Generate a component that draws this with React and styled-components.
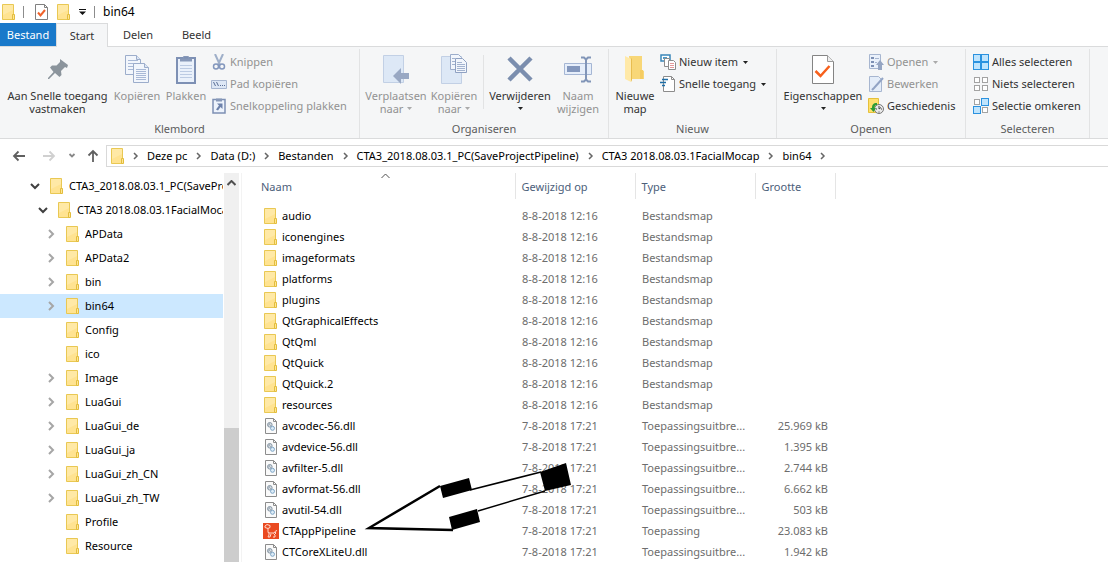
import React from "react";
import styled, { createGlobalStyle } from "styled-components";

const GlobalStyle = createGlobalStyle`
  * { box-sizing: border-box; }
  body { margin: 0; background: #fff; }
  body, button { font-family: "Noto Sans", "Open Sans", sans-serif; font-size: 11px; line-height: 16px; color: #000; }
  button { margin: 0; padding: 0; border: 0; background: none; }
  svg { display: block; flex: none; }
`;

const Window = styled.div`
  display: flex;
  flex-direction: column;
  height: 100vh;
  overflow: hidden;
`;

const TitleBar = styled.header`
  display: flex;
  align-items: center;
  height: 23px;
  padding-left: 2px;
`;
const TitleDivider = styled.span`
  width: 1px;
  height: 12px;
  margin: 0 8px;
  background: #8c8c8c;
`;
const QuickAccess = styled.div`
  display: flex;
  align-items: center;
  gap: 9px;
  padding-left: 3px;
`;
const WindowTitle = styled.span`
  font-size: 12px;
`;

const Tabs = styled.nav`
  display: flex;
  height: 24px;
  border-bottom: 1px solid #dadbdc;
`;
const Tab = styled.button`
  width: ${(p) => p.$width}px;
  height: ${(p) => (p.$file ? 23 : 24)}px;
  color: ${(p) => (p.$file ? "#fff" : "#333")};
  background: ${(p) => (p.$file ? "#1979ca" : p.$active ? "#f5f6f7" : "transparent")};
  border: ${(p) => (p.$active ? "1px solid #dadbdc" : "0")};
  border-bottom: 0;
`;

const Ribbon = styled.div`
  display: flex;
  height: 92px;
  background: #f5f6f7;
  border-bottom: 1px solid #dadbdc;
`;
const Group = styled.section`
  display: flex;
  flex-direction: column;
  height: 89px;
  width: ${(p) => p.$width}px;
  padding: 2px 0 0 ${(p) => p.$pad}px;
  border-right: 1px solid #e2e3e4;
  margin-top: 2px;
`;
const GroupBody = styled.div`
  display: flex;
  height: 71px;
`;
const GroupLabel = styled.div`
  margin-left: -${(p) => p.$pad}px;
  text-align: center;
  color: #5c5c5c;
  line-height: 14px;
`;
const BigButton = styled.button`
  display: flex;
  flex-direction: column;
  align-items: center;
  width: ${(p) => p.$width}px;
  padding-top: 2px;
  color: ${(p) => (p.disabled ? "#929292" : "#333")};
  white-space: nowrap;
  line-height: 13px;
`;
const BigIcon = styled.span`
  display: flex;
  align-items: center;
  justify-content: center;
  width: 32px;
  height: 32px;
  margin-bottom: 4px;
`;
const CaretLine = styled.span`
  display: flex;
  align-items: center;
  justify-content: center;
  gap: 4px;
  height: 13px;
`;
const Rule = styled.span`
  width: 1px;
  height: 54px;
  margin: 4px 2px 0 3px;
  background: #e2e3e4;
`;
const SmallColumn = styled.div`
  display: flex;
  flex-direction: column;
`;
const SmallButton = styled.button`
  display: flex;
  align-items: center;
  gap: 3px;
  height: 22px;
  color: ${(p) => (p.disabled ? "#929292" : "#333")};
  white-space: nowrap;
`;
const CaretGap = styled.span`
  margin-left: 2px;
`;

const AddressRow = styled.div`
  display: flex;
  align-items: center;
  height: 34px;
`;
const NavButtons = styled.div`
  display: flex;
  width: 106px;
  padding-left: 4px;
`;
const NavButton = styled.button`
  display: flex;
  justify-content: center;
  width: ${(p) => p.$width}px;
`;
const AddressBox = styled.nav`
  flex: 1;
  display: flex;
  align-items: center;
  gap: 8px;
  height: 22px;
  padding-left: 4px;
  border: 1px solid #d9d9d9;
  border-right: 0;
  white-space: nowrap;
`;

const Content = styled.main`
  flex: 1;
  min-height: 0;
  display: flex;
`;
const Tree = styled.ul`
  width: 224px;
  margin: 0;
  padding: 1px 1px 0 0;
  list-style: none;
  overflow: hidden;
`;
const TreeItem = styled.li`
  display: flex;
  align-items: center;
  height: 24px;
  padding-left: ${(p) => 26 + p.$level * 8}px;
  background: ${(p) => (p.$selected ? "#cce8ff" : "transparent")};
`;
const Twisty = styled.span`
  display: flex;
  flex: none;
  justify-content: center;
  width: 17px;
  margin-right: 7px;
`;
const TreeLabel = styled.span`
  flex: 1;
  min-width: 0;
  margin-left: 6px;
  white-space: nowrap;
  overflow: hidden;
`;
const ScrollBar = styled.div`
  display: flex;
  flex-direction: column;
  justify-content: space-between;
  align-items: center;
  width: 15px;
  padding-top: 7px;
  background: #f0f0f0;
`;
const Thumb = styled.div`
  width: 15px;
  height: 35%;
  background: #cdcdcd;
`;

const ListPane = styled.section`
  flex: 1;
  position: relative;
  margin-left: 2px;
  padding-left: 13px;
  border-left: 1px solid #f3f3f3;
  overflow: hidden;
`;
const FileTable = styled.table`
  width: 580px;
  table-layout: fixed;
  border-collapse: collapse;
`;
const HeadCell = styled.th`
  position: relative;
  width: ${(p) => p.$width}px;
  height: 26px;
  padding: 2px 0 0 6px;
  font-weight: 400;
  text-align: left;
  color: #4c607a;
  border-right: 1px solid #e5e5e5;
`;
const SortMark = styled.span`
  position: absolute;
  top: 0;
  left: 126px;
`;
const Spacer = styled.tr`
  height: 6px;
`;
const Cell = styled.td`
  height: 21px;
  padding: 0 7px;
  color: #6d6d6d;
  text-align: ${(p) => (p.$right ? "right" : "left")};
  white-space: nowrap;
  overflow: hidden;
`;
const FileName = styled.span`
  display: flex;
  align-items: center;
  gap: 3px;
  color: #000;
`;
const FileIcon = styled.span`
  display: flex;
  justify-content: center;
  width: 17px;
`;
const Pointer = styled.svg`
  position: absolute;
  top: 284px;
  left: 121px;
`;

const Folder = () => (
  <svg width="13" height="16" viewBox="0 0 13 16">
    <path d="M.5.5h11v15H.5z" fill="#ffe391" stroke="#e9c853" />
    <path d="M1 1h10v5L1 11z" fill="#ffe9a6" />
    <path d="M10.5 10.5h2v5h-2z" fill="#ffe694" stroke="#e3bd3d" />
  </svg>
);
const CheckDoc = ({ big }) => (
  <svg width={big ? 22 : 13} height={big ? 29 : 16} viewBox={big ? "0 0 22 29" : "0 0 13 16"}>
    {big ? (
      <g fill="none">
        <path d="M.5.5h15l6 6v22H.5z" fill="#fff" stroke="#848484" />
        <path d="M15.5.5v6h6" fill="#eee" stroke="#9a9a9a" />
        <path d="M3.5 16l5 5 9-10" stroke="#f7601c" strokeWidth="2.5" />
      </g>
    ) : (
      <g fill="none">
        <path d="M.5.5h9l3 3v12H.5z" fill="#fff" stroke="#808080" />
        <path d="M9.5.5v3h3" stroke="#808080" />
        <path d="M3 8.5l2.500 3L10 6" stroke="#f0622a" strokeWidth="2" />
      </g>
    )}
  </svg>
);
const Caret = ({ color = "#222" }) => (
  <svg width="5" height="3" viewBox="0 0 5 3"><path d="M0 0h5L2.500 3z" fill={color} /></svg>
);
const QuickMenu = () => (
  <svg width="7" height="6" viewBox="0 0 7 6"><path d="M0 0h7v1H0zM0 2.500h7L3.500 6z" fill="#111" /></svg>
);
const Pin = () => (
  <svg width="22" height="22" viewBox="0 0 22 22">
    <path d="M13 1l8 6-1 3-2-1-4 4 .5 4-2 2-4.500-4L2 21H1v-1l5.500-6L3 9.500l2-2h4.500L13 4z" fill="#8b949c" />
  </svg>
);
const Sheet = ({ x, y, lines }) => (
  <g transform={`translate(${x} ${y})`}>
    <path d="M.5.5h11l4 4v15H.5z" fill="#f2f6fc" stroke="#9cadcb" />
    <path d="M11.5.5v4h4" fill="#dce6f4" stroke="#9cadcb" />
    {lines.map((l) => <path key={l} d={`M3 ${l}.5h10`} stroke="#a9b9d6" />)}
  </g>
);
const CopyIcon = () => (
  <svg width="24" height="28" viewBox="0 0 24 28">
    <Sheet x={0} y={0} lines={[5, 8, 11, 14]} />
    <Sheet x={8} y={8} lines={[6, 8, 10, 12, 14, 16]} />
  </svg>
);
const Clipboard = () => (
  <svg width="20" height="29" viewBox="0 0 20 29">
    <path d="M1 3h18v25H1z" fill="#eaf1fb" stroke="#7d90b4" strokeWidth="2" />
    <path d="M4 3.500h12v3H4z" fill="#8798b8" />
    <path d="M7.500 3.500v-2h5v2" fill="none" stroke="#8798b8" />
    <path d="M4 10.500h12M4 13.500h12M4 16.500h12M4 19.500h12M4 22.500h12" stroke="#bccbe3" />
  </svg>
);
const Scissors = () => (
  <svg width="16" height="16" viewBox="0 0 16 16" fill="none">
    <path d="M4 0l5 11M12 0L7 11" stroke="#9fafc9" strokeWidth="2" />
    <circle cx="5" cy="12.500" r="2.500" stroke="#8397bd" strokeWidth="1.500" />
    <circle cx="11" cy="12.500" r="2.500" stroke="#8397bd" strokeWidth="1.500" />
  </svg>
);
const PathIcon = () => (
  <svg width="16" height="16" viewBox="0 0 16 16">
    <path d="M.5 4.500h15v8H.5z" fill="#dde7f5" stroke="#a7b6d0" />
    <path d="M2.500 6l2 4M5.500 6l2 4" stroke="#5a6e96" />
    <path d="M9 9h1v1H9zM11 9h1v1h-1zM13 9h1v1h-1z" fill="#5a6e96" />
  </svg>
);
const PasteLink = () => (
  <svg width="16" height="16" viewBox="0 0 16 16">
    <path d="M2 1.500h12V15H2z" fill="#edf3fc" stroke="#7d90b4" strokeWidth="1.500" />
    <path d="M5 .5h6v3H5z" fill="#8798b8" />
    <path d="M6 5.500h5.500V11L9.500 9 7 12.500 5 11.500 8 7.500z" fill="#6d82ab" />
  </svg>
);
const Binder = () => <path d="M.5.5h20v27H.5z" fill="#dde8f6" stroke="#c2d0e5" />;
const MoveTo = () => (
  <svg width="26" height="29" viewBox="0 0 26 29">
    <Binder />
    <path d="M10 21l8-8v5h8v6h-8v5z" fill="#99a8c3" />
  </svg>
);
const CopyTo = () => (
  <svg width="26" height="30" viewBox="0 0 26 30">
    <g transform="translate(0 2)"><Binder /></g>
    <path d="M9.500.5h8l3 3v12h-11z" fill="#f2f6fc" stroke="#9cadcb" />
    <path d="M14.500 4.500h7l4 4v10h-11z" fill="#f2f6fc" stroke="#8fa1c2" />
    <path d="M11 4.500h3M11 7.500h3M11 10.500h3M16 8.500h5M16 10.500h8M16 12.500h8M16 14.500h8M16 16.500h8" stroke="#a3b3cf" />
  </svg>
);
const DeleteIcon = () => (
  <svg width="26" height="26" viewBox="0 0 26 26">
    <path d="M2 2l22 22M24 2L2 24" stroke="#7b8eae" strokeWidth="4.500" />
  </svg>
);
const Rename = () => (
  <svg width="28" height="27" viewBox="0 0 28 27" fill="none">
    <path d="M.5 7.500h27v11H.5z" fill="#e6eefa" stroke="#a5b6d4" />
    <path d="M3 10h13v6H3z" fill="#8397bd" />
    <path d="M17 1.500h3l2 2 2-2h3M17 25.500h3l2-2 2 2h3M22 3v21" stroke="#8195b8" strokeWidth="2" />
  </svg>
);
const NewFolder = () => (
  <svg width="20" height="28" viewBox="0 0 20 28">
    <path d="M4 1h13v14l2 1v8H6z" fill="#f8d778" />
    <path d="M0 1l6 3v23l-6-3z" fill="#ffe9a8" />
    <path d="M6 4l1-1v22l-1 2z" fill="#e8bd50" />
    <path d="M15 15h3v9h-3z" fill="#f5cc62" />
  </svg>
);
const NewItem = () => (
  <svg width="16" height="16" viewBox="0 0 16 16">
    <path d="M1 1h9v6H1z" fill="#fff" stroke="#3a87b9" strokeWidth="1.500" />
    <path d="M3 3h4v2H3z" fill="#4b9bc9" />
    <path d="M4.500 4.500h5v8h-5z" fill="#fff" stroke="#8c8c8c" />
    <path d="M8.500 6.500h5l2 2v7h-7z" fill="#fff" stroke="#8c8c8c" />
    <path d="M10 9.500h4M10 11.500h4M10 13.500h4" stroke="#e49a9a" />
  </svg>
);
const EasyAccess = () => (
  <svg width="16" height="16" viewBox="0 0 16 16">
    <path d="M3.500.5h8l3 3v12h-11z" fill="#fff" stroke="#8c8c8c" />
    <path d="M11.500.5v3h3" fill="none" stroke="#8c8c8c" />
    <path d="M2 3.500h6M0 6.500h6M2 9.500h3" stroke="#1f6fa8" strokeWidth="1.500" />
  </svg>
);
const OpenIcon = () => (
  <svg width="16" height="16" viewBox="0 0 16 16">
    <path d="M1.500.5h11v14h-11z" fill="#eaf1fb" stroke="#a7b6d0" />
    <path d="M3 3h3v2H3zM3 7h3v2H3zM3 11h3v2H3z" fill="#7d90b4" />
    <path d="M7 4.500h4M7 8.500h2" stroke="#a7b6d0" />
    <path d="M12 6l4 5h-2v5h-4v-5H8z" fill="#95a5c2" />
  </svg>
);
const EditIcon = () => (
  <svg width="16" height="16" viewBox="0 0 16 16">
    <path d="M1.500.5h9l3 3v12h-12z" fill="#e4edf9" stroke="#a7b6d0" />
    <path d="M15 2L6 12l-2 2" stroke="#92a4c5" strokeWidth="2" fill="none" />
  </svg>
);
const HistoryIcon = () => (
  <svg width="16" height="16" viewBox="0 0 16 16">
    <path d="M.5.5h10v14H.5z" fill="#ffe06c" stroke="#e5c03b" />
    <circle cx="11" cy="11" r="4.500" fill="#e9e9e9" stroke="#777" />
    <path d="M11 8v3l2-1.500M11 13.500v1M8 11h1M13 11h1" stroke="#444" fill="none" />
    <path d="M9 5C5 5 4 7 4 10H2l3.500 4L8 10H6.500c0-2 .5-3 2.500-3z" fill="#2d9c34" />
  </svg>
);
const SelectIcon = ({ mode }) => (
  <svg width="16" height="16" viewBox="0 0 16 16">
    {[[0, 0], [1, 0], [0, 1], [1, 1]].map(([c, r]) => {
      const on = mode === "all" || (mode === "invert" && c !== r);
      return on ? (
        <rect key={`${c}${r}`} x={c * 8 + 0.5} y={r * 8 + 0.5} width="7" height="7" fill="#bfe4fd" stroke="#2b92df" />
      ) : (
        <rect key={`${c}${r}`} x={c * 8 + 1.5} y={r * 8 + 1.5} width="5" height="5" fill="#fff" stroke="#a3a3a3" />
      );
    })}
  </svg>
);
const Arrow = ({ d, color = "#606060", size = 14 }) => (
  <svg width={size} height="14" viewBox={`0 0 ${size} 14`}><path d={d} fill="none" stroke={color} strokeWidth="1.800" /></svg>
);
const Chevron = ({ open }) => (
  <svg width="10" height="10" viewBox="0 0 10 10">
    <path d={open ? "M1 3l4 4 4-4" : "M3 1l4 4-4 4"} fill="none" stroke={open ? "#404040" : "#a6a6a6"} strokeWidth="2" />
  </svg>
);
const CrumbArrow = () => (
  <svg width="7" height="8" viewBox="0 0 7 8"><path d="M2 1l3 3-3 3" fill="none" stroke="#666" strokeWidth="1.500" /></svg>
);
const UpMark = ({ bold }) => (
  <svg width="9" height="6" viewBox="0 0 9 6"><path d="M.5 5l4-4 4 4" fill="none" stroke="#505050" strokeWidth={bold ? 2 : 1} /></svg>
);
const DllIcon = () => (
  <svg width="12" height="16" viewBox="0 0 12 16">
    <path d="M.5.5h8l3 3v12H.5z" fill="#fafafa" stroke="#8c8c8c" />
    <path d="M8.500.5v3h3" fill="none" stroke="#8c8c8c" />
    <circle cx="4.800" cy="6.800" r="2.300" fill="#d5dde4" stroke="#8897a5" />
    <path d="M3.500 5.500l3 3M5 4.500L3 8" stroke="#a5b0ba" />
    <circle cx="7.500" cy="10.300" r="2" fill="#dcecf8" stroke="#7fa6c6" />
  </svg>
);
const AppIcon = () => (
  <svg width="16" height="16" viewBox="0 0 16 16">
    <path d="M0 0h16v16H0z" fill="#ea4a21" />
    <path d="M2 4.500V3l2-1.500 3 1v2L5 5.500zM5 5.500v4l2 .5h4l2-2.500 1 .5M6 10v2l-1 2h2l1-3M10.500 10.500l1.500 1.500v2h-2M12.500 9v2" fill="none" stroke="#ffd9cc" />
  </svg>
);

const crumbs = ["Deze pc", "Data (D:)", "Bestanden", "CTA3_2018.08.03.1_PC(SaveProjectPipeline)", "CTA3 2018.08.03.1FacialMocap", "bin64"];

const tree = [
  ["CTA3_2018.08.03.1_PC(SaveProjectPipeline)", 0, "open"],
  ["CTA3 2018.08.03.1FacialMocap", 1, "open"],
  ["APData", 2, "closed"],
  ["APData2", 2, "closed"],
  ["bin", 2, "closed"],
  ["bin64", 2, "closed"],
  ["Config", 2],
  ["ico", 2],
  ["Image", 2, "closed"],
  ["LuaGui", 2, "closed"],
  ["LuaGui_de", 2, "closed"],
  ["LuaGui_ja", 2, "closed"],
  ["LuaGui_zh_CN", 2, "closed"],
  ["LuaGui_zh_TW", 2, "closed"],
  ["Profile", 2],
  ["Resource", 2],
];

const folders = ["audio", "iconengines", "imageformats", "platforms", "plugins", "QtGraphicalEffects", "QtQml", "QtQuick", "QtQuick.2", "resources"];
const libraries = [
  ["avcodec-56.dll", "25.969 kB"],
  ["avdevice-56.dll", "1.395 kB"],
  ["avfilter-5.dll", "2.744 kB"],
  ["avformat-56.dll", "6.662 kB"],
  ["avutil-54.dll", "503 kB"],
  ["CTAppPipeline", "23.083 kB"],
  ["CTCoreXLiteU.dll", "1.942 kB"],
];
const files = [
  ...folders.map((name) => ({ name, date: "8-8-2018 12:16", type: "Bestandsmap", size: "", icon: <Folder /> })),
  ...libraries.map(([name, size]) => {
    const app = name === "CTAppPipeline";
    return { name, size, date: "7-8-2018 17:21", type: app ? "Toepassing" : "Toepassingsuitbre...", icon: app ? <AppIcon /> : <DllIcon /> };
  }),
];

function Big({ icon, lines, width, disabled, caret }) {
  return (
    <BigButton $width={width} disabled={disabled}>
      <BigIcon>{icon}</BigIcon>
      <span>{lines[0]}</span>
      <CaretLine>{lines[1]}{caret && <Caret color={disabled ? "#aaa" : "#222"} />}</CaretLine>
    </BigButton>
  );
}

function Small({ icon, label, disabled, caret }) {
  return (
    <SmallButton disabled={disabled}>
      {icon}
      {label}
      {caret && <CaretGap><Caret color={disabled ? "#aaa" : "#222"} /></CaretGap>}
    </SmallButton>
  );
}

function RibbonGroup({ label, width, pad, children }) {
  return (
    <Group $width={width} $pad={pad} aria-label={label}>
      <GroupBody>{children}</GroupBody>
      <GroupLabel $pad={pad}>{label}</GroupLabel>
    </Group>
  );
}

export default function App() {
  return (
    <Window>
      <GlobalStyle />
      <TitleBar>
        <Folder />
        <TitleDivider />
        <QuickAccess>
          <button aria-label="Eigenschappen"><CheckDoc /></button>
          <button aria-label="Nieuwe map"><Folder /></button>
          <button aria-label="Werkbalk aanpassen"><QuickMenu /></button>
        </QuickAccess>
        <TitleDivider />
        <WindowTitle>bin64</WindowTitle>
      </TitleBar>
      <Tabs>
        <Tab $file $width={56}>Bestand</Tab>
        <Tab $active $width={52}>Start</Tab>
        <Tab $width={60}>Delen</Tab>
        <Tab $width={57}>Beeld</Tab>
      </Tabs>
      <Ribbon>
        <RibbonGroup label="Klembord" width={360} pad={2}>
          <Big icon={<Pin />} lines={["Aan Snelle toegang", "vastmaken"]} width={111} />
          <Big icon={<CopyIcon />} lines={["Kopiëren"]} width={48} disabled />
          <Big icon={<Clipboard />} lines={["Plakken"]} width={50} disabled />
          <SmallColumn>
            <Small icon={<Scissors />} label="Knippen" disabled />
            <Small icon={<PathIcon />} label="Pad kopiëren" disabled />
            <Small icon={<PasteLink />} label="Snelkoppeling plakken" disabled />
          </SmallColumn>
        </RibbonGroup>
        <RibbonGroup label="Organiseren" width={249} pad={4}>
          <Big icon={<MoveTo />} lines={["Verplaatsen", "naar"]} width={64} disabled caret />
          <Big icon={<CopyTo />} lines={["Kopiëren", "naar"]} width={52} disabled caret />
          <Rule />
          <Big icon={<DeleteIcon />} lines={["Verwijderen"]} width={68} caret />
          <Big icon={<Rename />} lines={["Naam", "wijzigen"]} width={48} disabled />
        </RibbonGroup>
        <RibbonGroup label="Nieuw" width={168} pad={1}>
          <Big icon={<NewFolder />} lines={["Nieuwe", "map"]} width={50} />
          <SmallColumn>
            <Small icon={<NewItem />} label="Nieuw item" caret />
            <Small icon={<EasyAccess />} label="Snelle toegang" caret />
          </SmallColumn>
        </RibbonGroup>
        <RibbonGroup label="Openen" width={189} pad={1}>
          <Big icon={<CheckDoc big />} lines={["Eigenschappen"]} width={90} caret />
          <SmallColumn>
            <Small icon={<OpenIcon />} label="Openen" disabled caret />
            <Small icon={<EditIcon />} label="Bewerken" disabled />
            <Small icon={<HistoryIcon />} label="Geschiedenis" />
          </SmallColumn>
        </RibbonGroup>
        <RibbonGroup label="Selecteren" width={124} pad={7}>
          <SmallColumn>
            <Small icon={<SelectIcon mode="all" />} label="Alles selecteren" />
            <Small icon={<SelectIcon mode="none" />} label="Niets selecteren" />
            <Small icon={<SelectIcon mode="invert" />} label="Selectie omkeren" />
          </SmallColumn>
        </RibbonGroup>
      </Ribbon>
      <AddressRow>
        <NavButtons>
          <NavButton $width={30} aria-label="Terug"><Arrow d="M13 7H2M6.500 2.500L2 7l4.500 4.500" /></NavButton>
          <NavButton $width={30} aria-label="Vooruit"><Arrow d="M1 7h11M7.500 2.500L12 7l-4.500 4.500" color="#d0d0d0" /></NavButton>
          <NavButton $width={16} aria-label="Recente locaties"><Arrow size={8} d="M1.500 5L4 7.500 6.500 5" color="#888" /></NavButton>
          <NavButton $width={26} aria-label="Omhoog"><Arrow d="M7 13V2M2.500 6.500L7 2l4.500 4.500" /></NavButton>
        </NavButtons>
        <AddressBox aria-label="Adres">
          <Folder />
          <CrumbArrow />
          {crumbs.map((c) => (
            <React.Fragment key={c}>
              <button>{c}</button>
              <CrumbArrow />
            </React.Fragment>
          ))}
        </AddressBox>
      </AddressRow>
      <Content>
        <Tree>
          {tree.map(([name, level, state]) => (
            <TreeItem key={name} $level={level} $selected={name === "bin64"}>
              <Twisty>{state && <Chevron open={state === "open"} />}</Twisty>
              <Folder />
              <TreeLabel>{name}</TreeLabel>
            </TreeItem>
          ))}
        </Tree>
        <ScrollBar>
          <UpMark bold />
          <Thumb />
        </ScrollBar>
        <ListPane>
          <FileTable>
            <thead>
              <tr>
                <HeadCell $width={260}>Naam<SortMark><UpMark /></SortMark></HeadCell>
                <HeadCell $width={120}>Gewijzigd op</HeadCell>
                <HeadCell $width={120}>Type</HeadCell>
                <HeadCell $width={80}>Grootte</HeadCell>
              </tr>
            </thead>
            <tbody>
              <Spacer />
              {files.map((f) => (
                <tr key={f.name}>
                  <Cell><FileName><FileIcon>{f.icon}</FileIcon>{f.name}</FileName></Cell>
                  <Cell>{f.date}</Cell>
                  <Cell>{f.type}</Cell>
                  <Cell $right>{f.size}</Cell>
                </tr>
              ))}
            </tbody>
          </FileTable>
          <Pointer width="220" height="80" viewBox="363 457 220 80" aria-hidden="true">
            <path d="M470 490l71-18M545 491l-67 20" stroke="#000" strokeWidth="1.500" />
            <path d="M440 486l-71 42 84 2" fill="none" stroke="#000" strokeWidth="2.500" />
            <path d="M440 486l29-8 3 12-29 8zM540 472l26-9 5 22-26 6zM449 517l28-8 3 13-28 8z" />
          </Pointer>
        </ListPane>
      </Content>
    </Window>
  );
}
